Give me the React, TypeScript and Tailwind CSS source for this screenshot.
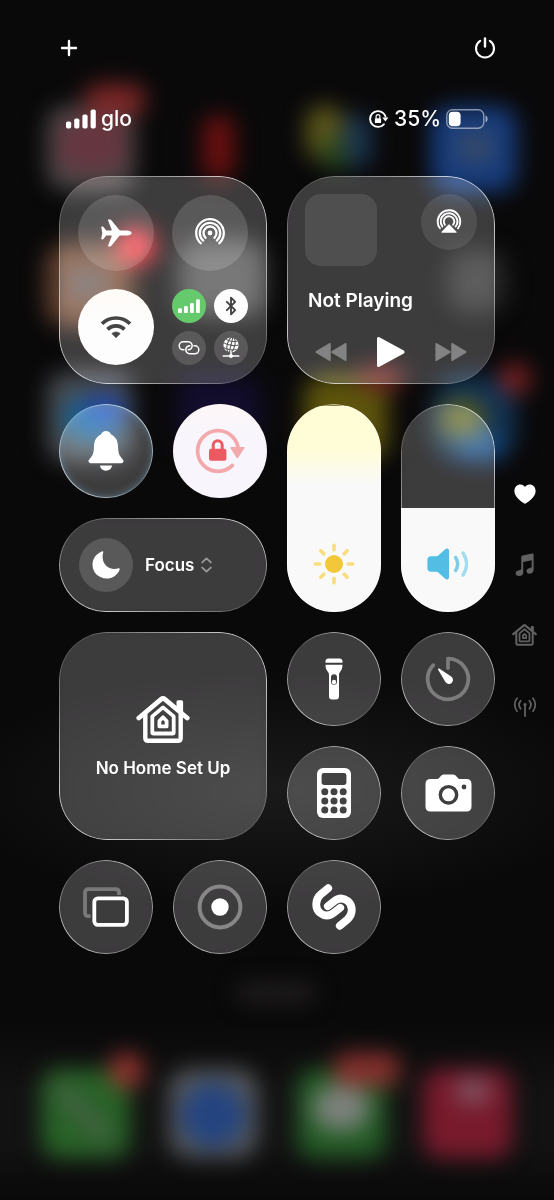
import React, { useState } from 'react';
import { Bluetooth, Plus } from 'lucide-react';

// Glass surface with a rim that catches light at the top right and bottom left
const TILE =
  "relative bg-[#a0a0a0]/32 backdrop-blur-xs backdrop-brightness-150 before:pointer-events-none before:absolute before:inset-0 before:rounded-[inherit] before:bg-linear-to-tr before:from-white/70 before:from-12% before:via-white/10 before:to-white/70 before:to-88% before:p-px before:content-[''] before:[mask:linear-gradient(#000_0_0)_content-box_exclude,linear-gradient(#000_0_0)]";
const ROUND = 'flex items-center justify-center rounded-full';

/* ---------- Blurred home screen behind the controls ---------- */

const Backdrop: React.FC = () => (
  <svg
    aria-hidden="true"
    viewBox="0 0 554 1200"
    preserveAspectRatio="xMidYMid slice"
    className="absolute inset-0 h-full w-full"
  >
    <defs>
      <filter id="soft" filterUnits="userSpaceOnUse" x="-40" y="-40" width="640" height="1280" colorInterpolationFilters="sRGB">
        <feGaussianBlur stdDeviation="11" />
      </filter>
      <radialGradient id="glow">
        <stop offset="0" stopColor="#1b1a1a" />
        <stop offset="1" stopColor="#1b1a1a" stopOpacity="0" />
      </radialGradient>
      <linearGradient id="dock" x1="0" y1="0" x2="0" y2="1">
        <stop offset="0" stopColor="#121212" stopOpacity="0" />
        <stop offset="0.4" stopColor="#121212" />
        <stop offset="0.7" stopColor="#121212" />
        <stop offset="1" stopColor="#121212" stopOpacity="0" />
      </linearGradient>
    </defs>
    <ellipse cx="277" cy="790" rx="330" ry="120" fill="url(#glow)" />
    <rect x="0" y="1020" width="554" height="180" fill="url(#dock)" />

    <g filter="url(#soft)">
      {/* Row 1 */}
      <rect x="47" y="106" width="88" height="84" rx="20" fill="#4c4a4a" />
      <rect x="58" y="118" width="68" height="54" rx="16" fill="#663640" />
      <rect x="84" y="84" width="62" height="32" rx="16" fill="#7c2626" />
      <rect x="203" y="116" width="31" height="62" rx="10" fill="#6c1010" />
      <rect x="306" y="106" width="38" height="54" rx="16" fill="#5c571a" />
      <rect x="342" y="114" width="30" height="54" rx="16" fill="#1a3450" />
      <rect x="322" y="138" width="26" height="32" rx="10" fill="#26461f" />
      <rect x="431" y="106" width="86" height="86" rx="20" fill="#173c7c" />
      <rect x="456" y="130" width="38" height="34" rx="12" fill="#35496a" />

      {/* Row 2 */}
      <rect x="46" y="244" width="86" height="82" rx="20" fill="#68432f" />
      <rect x="66" y="268" width="42" height="32" rx="14" fill="#575050" />
      <rect x="118" y="228" width="36" height="36" rx="16" fill="#e8252f" />
      <rect x="178" y="240" width="88" height="76" rx="20" fill="#444444" />
      <rect x="448" y="250" width="58" height="62" rx="18" fill="#292929" />

      {/* Row 3 */}
      <rect x="47" y="372" width="86" height="90" rx="20" fill="#484c50" />
      <rect x="62" y="396" width="62" height="44" rx="22" fill="#175f8c" />
      <rect x="84" y="394" width="42" height="28" rx="14" fill="#2044a4" />
      <rect x="176" y="376" width="84" height="70" rx="20" fill="#120d2c" />
      <rect x="304" y="376" width="84" height="84" rx="20" fill="#5c540c" />
      <rect x="358" y="366" width="46" height="24" rx="12" fill="#6c2222" />
      <rect x="432" y="376" width="84" height="84" rx="30" fill="#123352" />
      <rect x="440" y="400" width="44" height="38" rx="16" fill="#5e5e20" />
      <rect x="456" y="436" width="50" height="24" rx="12" fill="#164a86" />
      <rect x="499" y="363" width="32" height="32" rx="16" fill="#782022" />

      {/* Search pill */}
      <rect x="236" y="983" width="80" height="20" rx="10" fill="#201e1e" />

      {/* Dock */}
      <rect x="41" y="1069" width="89" height="89" rx="18" fill="#286227" />
      <path d="M58 1086 L108 1140" stroke="#466046" strokeWidth="16" fill="none" />
      <rect x="109" y="1053" width="35" height="35" rx="17" fill="#92322e" />
      <rect x="169" y="1069" width="89" height="89" rx="22" fill="#585a5c" />
      <circle cx="213" cy="1115" r="33" fill="#244480" />
      <rect x="297" y="1069" width="89" height="89" rx="18" fill="#245c26" />
      <ellipse cx="341" cy="1108" rx="29" ry="23" fill="#7c827c" />
      <rect x="333" y="1053" width="68" height="33" rx="16" fill="#86302d" />
      <rect x="423" y="1069" width="89" height="89" rx="18" fill="#781a2c" />
      <ellipse cx="473" cy="1091" rx="18" ry="13" fill="#805664" />
    </g>
  </svg>
);

/* ---------- Icons ---------- */

const PowerIcon = () => (
  <svg width="22" height="22" viewBox="0 0 22 22" fill="none" stroke="white" strokeWidth="2.1" strokeLinecap="round">
    <path d="M6.2 3.9a9 9 0 1 0 9.6 0" />
    <path d="M11 1.4v8.2" strokeWidth="2.4" />
  </svg>
);

const CellBars = ({ className }: { className: string }) => (
  <svg viewBox="0 0 30 20" className={className} fill="white">
    <rect x="0" y="12.5" width="5.2" height="7" rx="1.8" />
    <rect x="8.2" y="9.4" width="5.2" height="10.1" rx="1.8" />
    <rect x="16.4" y="5.4" width="5.2" height="14.1" rx="1.8" />
    <rect x="24.6" y="0.5" width="5.2" height="19" rx="1.8" />
  </svg>
);

const StatusLock = () => (
  <svg width="20" height="20" viewBox="0 0 20 20" fill="none">
    <circle cx="9" cy="10" r="7.9" stroke="white" strokeWidth="1.9" strokeLinecap="round" pathLength={360} strokeDasharray="300 60" transform="rotate(42 9 10)" />
    <path d="M13.3 8.4h6.2l-3.1 4.2z" fill="white" />
    <path d="M7.1 9.4V7.6a1.9 1.9 0 0 1 3.8 0v1.8" stroke="white" strokeWidth="1.2" />
    <rect x="5.9" y="9.2" width="6.2" height="4.9" rx="0.9" fill="white" />
  </svg>
);

const BatteryIcon = () => (
  <svg width="42" height="20" viewBox="0 0 42 20" fill="none">
    <rect x="0.8" y="0.8" width="37" height="18.4" rx="5.6" stroke="white" strokeOpacity="0.5" strokeWidth="1.4" />
    <rect x="2.8" y="2.8" width="11.8" height="14.4" rx="3.8" fill="white" />
    <path d="M39.6 6.6c2.6 1 2.6 5.8 0 6.8z" fill="white" fillOpacity="0.6" />
  </svg>
);

const AirplaneIcon = () => (
  <svg width="31" height="28" viewBox="0 0 31 28" fill="white">
    <path d="M30.6 14c0 1.6-2.1 2.5-4.6 2.5h-6.6c-.6 0-.9.2-1.3.7l-7.7 9.6c-.4.5-.8.7-1.4.7H7.6c-.5 0-.7-.4-.5-.9l3.6-9.3c.2-.5 0-.8-.5-.8H5.9c-.5 0-.7.1-1 .5l-2.5 3c-.3.3-.5.4-.9.4H.9c-.5 0-.7-.3-.6-.8L1.3 14 .3 8.4c-.1-.5.1-.8.6-.8h.6c.4 0 .6.1.9.4l2.5 3c.3.4.5.5 1 .5h4.3c.5 0 .7-.3.5-.8L7.1 1.4c-.2-.5 0-.9.5-.9H9c.6 0 1 .2 1.4.7l7.7 9.6c.4.5.7.7 1.3.7H26c2.5 0 4.6.9 4.6 2.5z" />
  </svg>
);

const AirDropIcon = () => (
  <svg width="32" height="32" viewBox="0 0 32 32" fill="none" stroke="white" strokeWidth="2.3">
    {[13.8, 10.2, 6.5].map(r => (
      <circle key={r} cx="16" cy="16" r={r} strokeLinecap="round" pathLength={360} strokeDasharray="276 84" transform="rotate(132 16 16)" />
    ))}
    <circle cx="16" cy="16" r="2.4" fill="white" stroke="none" />
  </svg>
);

const WifiIcon = () => (
  <svg width="32" height="24" viewBox="0 0 32 24" fill="none" stroke="#454545" strokeWidth="3.7">
    <path d="M2 8.8a19.8 19.8 0 0 1 28 0" />
    <path d="M7.5 14.4a12 12 0 0 1 17 0" />
    <path d="M11.8 18.6a6 6 0 0 1 8.4 0L16 22.7z" fill="#454545" strokeWidth="0.6" strokeLinejoin="round" />
  </svg>
);

const LinkIcon = () => (
  <svg width="22" height="14" viewBox="0 0 22 14" fill="none" stroke="white" strokeWidth="1.5" strokeLinecap="round">
    <path d="M6 8.8H5.2a4 4 0 0 1 0-8h5a4 4 0 0 1 3.9 4.9 4 4 0 0 1-3.9 3.1" />
    <path d="M16 4.8h.8a4 4 0 0 1 0 8h-5a4 4 0 0 1-3.9-4.9 4 4 0 0 1 3.9-3.1" />
  </svg>
);

const GlobeIcon = () => (
  <svg width="18" height="22" viewBox="0 0 18 22" fill="none">
    <circle cx="9" cy="8" r="7.6" fill="white" />
    <g stroke="#5b5b5b" strokeWidth="1.1">
      <ellipse cx="9" cy="8" rx="3.8" ry="8" transform="rotate(14 9 8)" />
      <path d="M10.9 0.2 7.1 15.8M1.4 5.6c4 2.6 10 3.6 15.2 2.4M1.4 10.4c3.6 2.2 8.6 3 13.2 2.1M4.2 2.4c3 1.9 7 2.5 11 1.9" />
    </g>
    <path d="M9 15v4M1.2 19h15.6" stroke="white" strokeWidth="1.5" strokeLinecap="round" />
    <circle cx="9" cy="19" r="2" fill="white" />
  </svg>
);

const AirPlayIcon = () => (
  <svg width="26" height="26" viewBox="0 0 26 26" fill="none" stroke="white" strokeWidth="1.9">
    {[11.3, 8.3, 5.2].map(r => (
      <circle key={r} cx="13" cy="12.5" r={r} strokeLinecap="round" pathLength={360} strokeDasharray="254 106" transform="rotate(143 13 12.5)" />
    ))}
    <path d="M12.3 15.4a1 1 0 0 1 1.4 0l6.9 7.4c.5.5.2 1.2-.5 1.2H5.9c-.7 0-1-.7-.5-1.2z" fill="white" stroke="#4b4d50" strokeWidth="0.5" />
  </svg>
);

const SkipIcon = ({ className = '' }: { className?: string }) => (
  <svg width="32" height="20" viewBox="0 0 32 20" className={className} fill="#838383" stroke="#838383" strokeWidth="1.6" strokeLinejoin="round">
    <path d="M1.2 1.8v16.4L15 10z" />
    <path d="M17 1.8v16.4L30.8 10z" />
  </svg>
);

const PlayIcon = () => (
  <svg width="30" height="32" viewBox="0 0 30 32" fill="white" stroke="white" strokeWidth="3.2" strokeLinejoin="round">
    <path d="M2.6 2.6v26.8L27 16z" />
  </svg>
);

const BellIcon = () => (
  <svg width="36" height="40" viewBox="0 0 36 40" fill="white">
    <path d="M18 0c2.5 0 4.2 1.3 5 3.4 4.6 2 6.8 6.2 7 11.6.2 6.2.9 9 3.6 11.9 1.2 1.3 1.9 2.2 1.9 3.2 0 1.3-.9 2.1-2.3 2.1H2.800c-1.400 0-2.300-.8-2.300-2.100 0-1 .7-1.900 1.900-3.200C5.100 24 5.800 21.200 6 15c.2-5.400 2.400-9.600 7-11.600.8-2.100 2.500-3.400 5-3.400z" />
    <path d="M12 34.600h12c-.3 3-2.700 5.200-6 5.200s-5.700-2.200-6-5.200z" />
  </svg>
);

const RotationLockIcon = () => (
  <svg width="50" height="46" viewBox="0 0 50 46" fill="none">
    <circle cx="23" cy="23" r="20.4" stroke="#f3a8ac" strokeWidth="3.7" strokeLinecap="round" pathLength={360} strokeDasharray="310 50" transform="rotate(45 23 23)" />
    <path d="M36 19h13a.6.6 0 0 1 .5 1l-6.4 9.8a.9.9 0 0 1-1.5 0L35.4 20a.6.6 0 0 1 .6-1z" fill="#f3a8ac" />
    <path d="M18.2 21.5v-4.3a4.5 4.5 0 0 1 9 0v4.3" stroke="#ea5a60" strokeWidth="3" />
    <rect x="14" y="20.8" width="17.4" height="12" rx="2" fill="#ea5a60" />
  </svg>
);

const MoonIcon = () => (
  <svg width="28" height="28" viewBox="0 0 28 28" fill="white">
    <path d="M9.8.5c.9-.4 1.7.2 1.4 1.2-.4 1.3-.6 2.5-.6 4 0 7.2 5 12.2 12 12.2 1.5 0 2.6-.2 3.7-.6 1-.3 1.7.4 1.3 1.4C25.6 24 20.5 27.5 14.6 27.5 6.5 27.5.5 21.6.5 13.6.5 7.6 4.3 2.7 9.8.5z" />
  </svg>
);

const UpDownIcon = () => (
  <svg width="11" height="16" viewBox="0 0 11 16" fill="none" stroke="#9a9999" strokeWidth="1.9" strokeLinecap="round" strokeLinejoin="round">
    <path d="M1.2 5.4 5.5 1.4l4.3 4M1.2 10.6l4.3 4 4.3-4" />
  </svg>
);

const SunIcon = () => (
  <svg width="42" height="42" viewBox="0 0 42 42">
    <circle cx="21" cy="21" r="9" fill="#f2c83a" />
    {[0, 45, 90, 135, 180, 225, 270, 315].map(a => (
      <path key={a} d="M21 2.3v4.4" stroke="#f7de83" strokeWidth="3.7" strokeLinecap="round" transform={`rotate(${a} 21 21)`} />
    ))}
  </svg>
);

const SpeakerIcon = () => (
  <svg width="42" height="32" viewBox="0 0 42 32" fill="none">
    <path d="M4 8.3h5.6c.7 0 1.2-.2 1.7-.7L18.2 1.2c1.6-1.4 3.8-.8 3.8 1.5v26.6c0 2.3-2.2 2.9-3.8 1.5l-6.9-6.4c-.5-.5-1-.7-1.7-.7H4c-2.4 0-3.6-1.2-3.6-3.5v-8.4c0-2.3 1.2-3.5 3.6-3.5z" fill="#54bde3" />
    <path d="M28.6 9.5c2.6 4 2.6 9 0 13" stroke="#7dcdea" strokeWidth="3.4" strokeLinecap="round" />
    <path d="M36 5c4.600 6.800 4.600 15.200 0 22" stroke="#a3dbf0" strokeWidth="3.4" strokeLinecap="round" />
  </svg>
);

const HomeIcon = ({ className }: { className: string }) => (
  <svg viewBox="0 0 54 48" className={className} fill="none" stroke="currentColor" strokeLinecap="round" strokeLinejoin="round">
    <path d="M2.8 22 25 3.4c1.2-1 2.8-1 4 0L51.2 22" strokeWidth="4.8" />
    <path d="M42 5.800h3.600v11L42 13.400z" fill="currentColor" strokeWidth="3" />
    <path d="M9.300 18v24c0 1.800 1 2.800 2.800 2.800h29.800c1.800 0 2.800-1 2.800-2.800V18" strokeWidth="4.4" />
    <path d="M16.300 20.400v15.800c0 .8.5 1.300 1.300 1.300h18.800c.8 0 1.300-.5 1.300-1.300V20.400L27 11.400z" strokeWidth="3.8" />
    <path d="M23.400 25v5.400h7.200V25L27 21.300z" strokeWidth="3.8" />
  </svg>
);

const FlashlightIcon = () => (
  <svg width="18" height="42" viewBox="0 0 18 42" fill="white">
    <path d="M3.5.5h11c1.800 0 3 1.200 3 2.800v1.500H.5V3.300C.5 1.700 1.700.5 3.500.5z" />
    <path fillRule="evenodd" d="M.5 6.700h17c0 3-.7 4.900-2 6.600-1 1.300-1.500 2-1.500 3.700v21.400c0 1.900-1.100 3-3 3H7c-1.900 0-3-1.100-3-3V17c0-1.700-.5-2.400-1.500-3.700C1.200 11.600.5 9.700.5 6.700zM9 16.200a3 3 0 0 0-3 3v4.600a3 3 0 0 0 6 0v-4.600a3 3 0 0 0-3-3z" />
    <circle cx="9" cy="24" r="2.2" />
  </svg>
);

const TimerIcon = () => (
  <svg width="46" height="46" viewBox="0 0 46 46" fill="none">
    <path d="M23 12V2.7A20.3 20.3 0 1 1 8.1 9.2" stroke="#7d7c7c" strokeWidth="3.8" strokeLinecap="round" strokeLinejoin="round" />
    <path d="M13.3 13.9c-.7-.9.2-1.8 1.2-1.2l11.3 7.6a4.1 4.1 0 1 1-5.4 5.8z" fill="white" />
  </svg>
);

const CalculatorIcon = () => (
  <svg width="34" height="50" viewBox="0 0 34 50">
    <rect width="34" height="50" rx="6" fill="white" />
    <rect x="4.6" y="5" width="24.8" height="12" rx="2.4" fill="#434242" />
    {[23.8, 32.9, 42].map(y =>
      [7.8, 17, 26.2].map(x => <circle key={`${x}-${y}`} cx={x} cy={y} r="3.5" fill="#434242" />)
    )}
  </svg>
);

const CameraIcon = () => (
  <svg width="47" height="38" viewBox="0 0 47 38">
    <path d="M5.5 5h6.3c1 0 1.6-.3 2.3-1l1.8-2C16.9 1 18 .5 19.4.5h8.2c1.4 0 2.5.5 3.5 1.5l1.8 2c.7.7 1.3 1 2.3 1h6.3c3.2 0 5 1.8 5 5v22.5c0 3.2-1.8 5-5 5h-36c-3.2 0-5-1.8-5-5V10c0-3.2 1.8-5 5-5z" fill="white" />
    <circle cx="23.5" cy="20.8" r="8.2" fill="none" stroke="#3f3e3e" strokeWidth="3.4" />
    <circle cx="39" cy="13" r="2.4" fill="#3f3e3e" />
  </svg>
);

const MirrorIcon = () => (
  <svg width="46" height="40" viewBox="0 0 46 40" fill="none" strokeWidth="3.8" strokeLinejoin="round">
    <path d="M7.7 29.2H5.5c-2.2 0-3.5-1.2-3.5-3.4V5.6c0-2.2 1.3-3.4 3.5-3.4h27c2.2 0 3.5 1.2 3.5 3.4v2.3" stroke="#7a7979" />
    <rect x="11.3" y="11.3" width="32.6" height="26.6" rx="3.6" stroke="white" />
  </svg>
);

const RecordIcon = () => (
  <svg width="46" height="46" viewBox="0 0 46 46">
    <circle cx="23" cy="23" r="20.4" fill="none" stroke="#888787" strokeWidth="4" />
    <circle cx="23" cy="23" r="8.7" fill="white" />
  </svg>
);

const ShazamIcon = () => (
  <svg width="44" height="48" viewBox="-22 -24 44 48" fill="none" stroke="white" strokeWidth="7.8" strokeLinecap="round">
    <path d="M-5.8-18.8-13.4-12.4C-19.4-7.2-19 1.8-13.8 6-9.2 9.6-4.2 9.2.2 5.6L6.2.8" />
    <path d="M5.8 18.8 13.4 12.4C19.4 7.2 19-1.8 13.8-6 9.2-9.6 4.2-9.2-.2-5.6L-6.2-.8" />
  </svg>
);

const HeartIcon = () => (
  <svg width="22" height="20" viewBox="0 0 22 20" fill="white">
    <path d="M11 19.7c-.4 0-.9-.3-1.4-.6C4 15.5.4 11.4.4 7 .4 3.2 3 .5 6.4.5c2 0 3.6 1 4.6 2.6C12 1.5 13.6.5 15.6.5 19 .5 21.6 3.2 21.6 7c0 4.4-3.6 8.5-9.2 12.1-.5.3-1 .6-1.4.6z" />
  </svg>
);

const MusicIcon = () => (
  <svg width="19" height="23" viewBox="0 0 19 23" fill="#626161">
    <path d="M6.3 4.2c0-1 .4-1.5 1.4-1.7L17 .5c1-.2 1.6.2 1.6 1.2v14.9c0 2.5-1.6 4.2-4 4.2-1.9 0-3.1-1.1-3.1-2.7 0-1.8 1.3-2.7 3.5-3.2 1.3-.3 1.7-.6 1.7-1.5V7.2L8.2 9v10.4C8.2 21.7 6.6 23 4 23 1.9 23 .6 21.9.6 20.3c0-1.7 1.3-2.7 3.4-3.1 1.6-.3 2.3-.6 2.3-1.7z" />
  </svg>
);

const AntennaIcon = () => (
  <svg width="24" height="20" viewBox="0 0 24 20" fill="none" stroke="#626161" strokeWidth="1.8" strokeLinecap="round">
    <path d="M4 1.2a10.5 10.5 0 0 0 0 13M20 1.2a10.5 10.5 0 0 1 0 13M7.6 3.7a6.5 6.5 0 0 0 0 8M16.4 3.7a6.5 6.5 0 0 1 0 8M12 8v11" />
    <circle cx="12" cy="7.6" r="1.6" fill="#626161" stroke="none" />
  </svg>
);

/* ---------- Controls ---------- */

interface RoundButtonProps {
  label: string;
  className?: string;
  children: React.ReactNode;
}

const RoundButton: React.FC<RoundButtonProps> = ({ label, className = '', children }) => (
  <button type="button" aria-label={label} className={`${ROUND} ${className}`}>
    {children}
  </button>
);

interface LevelSliderProps {
  label: string;
  initial: number;
  fillClass: string;
  children: React.ReactNode;
}

const LevelSlider: React.FC<LevelSliderProps> = ({ label, initial, fillClass, children }) => {
  const [level, setLevel] = useState(initial);

  return (
    <div className={`row-span-2 flex flex-col justify-end overflow-hidden rounded-full ${TILE}`}>
      <div className={`w-full ${fillClass}`} style={{ height: `${level}%` }} />
      <div className="pointer-events-none absolute inset-x-0 bottom-0 flex h-24 items-center justify-center">
        {children}
      </div>
      <input
        type="range"
        aria-label={label}
        min={0}
        max={100}
        value={level}
        onChange={e => setLevel(Number(e.target.value))}
        className="absolute inset-0 h-full w-full cursor-pointer opacity-0 [direction:rtl] [writing-mode:vertical-lr]"
      />
    </div>
  );
};

const Connectivity: React.FC = () => (
  <section
    aria-label="Connectivity"
    className={`col-span-2 row-span-2 grid aspect-square grid-cols-2 grid-rows-2 gap-[18px] rounded-[48px] p-[19px] ${TILE}`}
  >
    <RoundButton label="Airplane Mode" className="bg-white/15"><AirplaneIcon /></RoundButton>
    <RoundButton label="AirDrop" className="bg-white/15"><AirDropIcon /></RoundButton>
    <RoundButton label="Wi-Fi" className="bg-linear-to-b from-[#fffbf5] to-[#fdfdfd] to-40%"><WifiIcon /></RoundButton>
    <div className="grid grid-cols-2 grid-rows-2 gap-2">
      <RoundButton label="Cellular Data" className="bg-[#65ca6c]"><CellBars className="w-[22px]" /></RoundButton>
      <RoundButton label="Bluetooth" className="bg-[#fdfdfd]">
        <Bluetooth size={20} strokeWidth={2.2} className="text-[#3f3f3f]" />
      </RoundButton>
      <RoundButton label="Personal Hotspot" className="bg-white/15"><LinkIcon /></RoundButton>
      <RoundButton label="VPN" className="bg-white/15"><GlobeIcon /></RoundButton>
    </div>
  </section>
);

const NowPlaying: React.FC = () => (
  <section
    aria-label="Now Playing"
    className={`col-span-2 row-span-2 flex aspect-square flex-col justify-between rounded-[48px] px-[18px] pt-[18px] pb-4 ${TILE}`}
  >
    <div className="flex items-start justify-between">
      <div className="size-18 rounded-2xl bg-white/10" />
      <RoundButton label="AirPlay" className="size-14 bg-white/10"><AirPlayIcon /></RoundButton>
    </div>
    <p className="px-[3px] text-[19px] leading-6 font-semibold">Not Playing</p>
    <div className="flex items-center justify-between px-[10px]">
      <button type="button" aria-label="Previous"><SkipIcon className="rotate-180" /></button>
      <button type="button" aria-label="Play"><PlayIcon /></button>
      <button type="button" aria-label="Next"><SkipIcon /></button>
    </div>
  </section>
);

const App: React.FC = () => {
  return (
    <div className="relative min-h-screen overflow-hidden bg-[#0a090a] font-['Inter','Liberation_Sans',sans-serif] text-white">
      <Backdrop />

      <div className="relative grid min-h-screen grid-cols-[59px_minmax(0,436px)_59px] justify-center">
        <main className="col-start-2">
          <header className="-mx-px flex h-24 items-center justify-between">
            <button type="button" aria-label="Add control">
              <Plus size={24} strokeWidth={2.4} className="-mx-px" />
            </button>
            <button type="button" aria-label="Power"><PowerIcon /></button>
          </header>

          <div className="mb-[34px] flex h-[46px] items-center justify-between px-[7px] text-[21px] leading-7 font-medium">
            <div className="flex items-center gap-[5px]">
              <CellBars className="w-[30px]" />
              <span>glo</span>
            </div>
            <div className="flex items-center gap-[5px]">
              <StatusLock />
              <span>35%</span>
              <BatteryIcon />
            </div>
          </div>

          <div className="grid grid-cols-4 gap-5">
            <Connectivity />
            <NowPlaying />

            <RoundButton
              label="Silent Mode"
              className={`aspect-square ${TILE} shadow-[inset_0_0_8px_rgba(120,180,215,0.55)]`}
            >
              <BellIcon />
            </RoundButton>
            <RoundButton label="Rotation Lock" className="aspect-square bg-linear-to-b from-[#fff6f6] to-[#f8f6fc] to-30%">
              <RotationLockIcon />
            </RoundButton>
            <LevelSlider
              label="Brightness"
              initial={99}
              fillClass="bg-linear-to-b from-[#fffdd6] from-10% via-[#fffdd9] via-22% to-[#f9f9f9] to-38%"
            >
              <SunIcon />
            </LevelSlider>
            <LevelSlider label="Volume" initial={50} fillClass="bg-[#f9f9f9]">
              <SpeakerIcon />
            </LevelSlider>

            <button
              type="button"
              className={`col-span-2 flex aspect-[208/94] items-center gap-3 rounded-full px-5 ${TILE}`}
            >
              <span className={`${ROUND} size-[54px] bg-white/15`}><MoonIcon /></span>
              <span className="flex items-center gap-[7px] text-[17px] leading-6 font-semibold">
                Focus
                <UpDownIcon />
              </span>
            </button>

            <button
              type="button"
              className={`col-span-2 row-span-2 flex aspect-square flex-col items-center justify-center gap-3 rounded-[48px] pt-1 ${TILE}`}
            >
              <HomeIcon className="w-[54px]" />
              <span className="text-[17px] leading-6 font-semibold">No Home Set Up</span>
            </button>
            <RoundButton label="Flashlight" className={`aspect-square ${TILE}`}><FlashlightIcon /></RoundButton>
            <RoundButton label="Timer" className={`aspect-square ${TILE}`}><TimerIcon /></RoundButton>
            <RoundButton label="Calculator" className={`aspect-square ${TILE}`}><CalculatorIcon /></RoundButton>
            <RoundButton label="Camera" className={`aspect-square ${TILE}`}><CameraIcon /></RoundButton>
            <RoundButton label="Screen Mirroring" className={`aspect-square ${TILE}`}><MirrorIcon /></RoundButton>
            <RoundButton label="Screen Recording" className={`aspect-square ${TILE}`}><RecordIcon /></RoundButton>
            <RoundButton label="Music Recognition" className={`aspect-square ${TILE}`}><ShazamIcon /></RoundButton>
          </div>
        </main>

        <nav aria-label="Pages" className="flex flex-col self-center">
          <button type="button" aria-label="Favorites" className="flex h-[71px] items-center justify-center"><HeartIcon /></button>
          <button type="button" aria-label="Media" className="flex h-[71px] items-center justify-center"><MusicIcon /></button>
          <button type="button" aria-label="Home" className="flex h-[71px] items-center justify-center text-[#626161]">
            <HomeIcon className="w-[25px]" />
          </button>
          <button type="button" aria-label="Connectivity" className="flex h-[71px] items-center justify-center"><AntennaIcon /></button>
        </nav>
      </div>
    </div>
  );
};

export default App;
